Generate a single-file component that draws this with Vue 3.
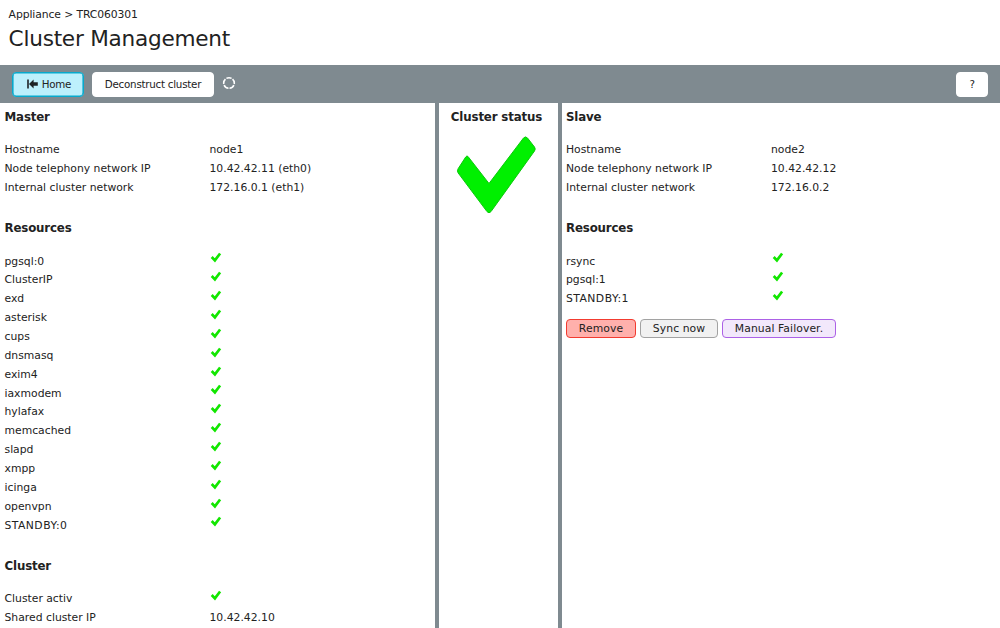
<script setup>
const master = [
  {
    title: 'Master',
    rows: [
      ['Hostname', 'node1'],
      ['Node telephony network IP', '10.42.42.11 (eth0)'],
      ['Internal cluster network', '172.16.0.1 (eth1)'],
    ],
  },
  {
    title: 'Resources',
    rows: [
      'pgsql:0', 'ClusterIP', 'exd', 'asterisk', 'cups', 'dnsmasq', 'exim4', 'iaxmodem',
      'hylafax', 'memcached', 'slapd', 'xmpp', 'icinga', 'openvpn', 'STANDBY:0',
    ].map((name) => [name, true]),
  },
  {
    title: 'Cluster',
    rows: [
      ['Cluster activ', true],
      ['Shared cluster IP', '10.42.42.10'],
    ],
  },
]

const slave = [
  {
    title: 'Slave',
    rows: [
      ['Hostname', 'node2'],
      ['Node telephony network IP', '10.42.42.12'],
      ['Internal cluster network', '172.16.0.2'],
    ],
  },
  {
    title: 'Resources',
    rows: ['rsync', 'pgsql:1', 'STANDBY:1'].map((name) => [name, true]),
  },
]

const nodes = [
  { key: 'master', sections: master },
  { key: 'slave', sections: slave },
]

const isCaps = (text) => text === text.toUpperCase()
</script>

<template>
  <div class="page">
    <header class="head">
      <div class="crumb"><span>Appliance &gt; TRC060301</span></div>
      <h1><span>Cluster Management</span></h1>
    </header>

    <nav class="toolbar">
      <button class="btn home">
        <svg width="11" height="10" viewBox="0 0 11 10">
          <path d="M1 0.5V9.5" stroke="#1c2224" stroke-width="1.6" />
          <path d="M2 5L6.6 0.5V3.3H10.8V6.7H6.6V9.5Z" fill="#1c2224" />
        </svg>
        <span>Home</span>
      </button>
      <button class="btn deconstruct"><span>Deconstruct cluster</span></button>
      <svg class="spinner" width="14" height="14" viewBox="0 0 14 14">
        <circle cx="7" cy="7" r="5.3" fill="none" stroke="#fff" stroke-width="1.6" pathLength="60" stroke-dasharray="10 2" stroke-dashoffset="-4" />
      </svg>
      <button class="btn help"><span>?</span></button>
    </nav>

    <main class="columns">
      <div v-for="node in nodes" :key="node.key" class="node" :class="node.key">
        <section v-for="section in node.sections" :key="section.title">
          <h2><span>{{ section.title }}</span></h2>
          <div v-for="row in section.rows" :key="row[0]" class="row">
            <div class="label" :class="{ caps: isCaps(row[0]) }"><span>{{ row[0] }}</span></div>
            <svg v-if="row[1] === true" class="tick" width="12" height="11" viewBox="0 0 12 11">
              <path d="M1.7 5L4.9 8.4L10.1 1.5" fill="none" stroke="#12e600" stroke-width="2.7" />
            </svg>
            <div v-else class="value"><span>{{ row[1] }}</span></div>
          </div>
        </section>
        <div v-if="node.key === 'slave'" class="actions">
          <button class="act remove"><span>Remove</span></button>
          <button class="act sync"><span>Sync now</span></button>
          <button class="act failover"><span>Manual Failover.</span></button>
        </div>
      </div>

      <div class="status">
        <h2><span>Cluster status</span></h2>
        <svg width="82" height="80" viewBox="0 0 82 80">
          <path d="M12 21.5L33 48.5L67.5 3Q69.5 0.8 71.5 3L78.5 12Q79.9 14 78.5 16L35 76.6Q33 79 31 76.6L2.2 38Q0.7 36 2.2 33.6L9.7 22Q10.9 20.3 12 21.5Z" fill="#00f000" stroke="#0cc80c" stroke-width="1" stroke-linejoin="round" />
        </svg>
      </div>
    </main>
  </div>
</template>

<style>
body {
  margin: 0;
  background: #fff;
  overflow: hidden;
}
</style>

<style scoped>
.page {
  height: 628px;
  overflow: hidden;
  display: flex;
  flex-direction: column;
  box-sizing: border-box;
  font-family: "DejaVu Sans", Verdana, sans-serif;
  font-size: 10.8px;
  color: #222;
  background: #fff;
}
span {
  white-space: nowrap;
}
.head {
  flex: none;
  height: 65px;
  box-sizing: border-box;
  padding: 6px 0 0 8.6px;
}
.crumb {
  height: 18px;
  line-height: 18px;
  letter-spacing: -0.1px;
}
h1 {
  margin: 0;
  font-size: 21.6px;
  line-height: 30px;
  font-weight: 400;
  letter-spacing: -0.24px;
}
.toolbar {
  flex: none;
  height: 38px;
  box-sizing: border-box;
  padding: 0 12px;
  display: flex;
  align-items: center;
  background: #7f8a90;
}
.btn {
  height: 25px;
  box-sizing: border-box;
  padding: 0;
  display: flex;
  align-items: center;
  justify-content: center;
  font: inherit;
  font-size: 10.3px;
  letter-spacing: -0.24px;
  color: inherit;
  background: #fff;
  border: 1px solid #fff;
  border-radius: 4px;
}
.home {
  width: 72px;
  gap: 4px;
  padding-left: 2px;
  background: #bdf0fc;
  border: 1px solid #08a9cc;
  box-shadow: inset 0 0 0 0.6px #08a9cc;
}
.deconstruct {
  width: 122px;
  margin-left: 8px;
}
.spinner {
  margin: -2px 0 0 8px;
}
.help {
  width: 32px;
  margin-left: auto;
}
.columns {
  flex: 1;
  min-height: 0;
  display: grid;
  grid-template-columns: 435px 119px 438px;
  column-gap: 4px;
  background: #7f8a90;
}
.node,
.status {
  grid-row: 1;
  min-width: 0;
  min-height: 0;
  overflow: hidden;
  background: #fff;
  padding-top: 5.1px;
}
.node {
  padding-left: 4.5px;
}
.master {
  grid-column: 1;
}
.slave {
  grid-column: 3;
  padding-left: 4px;
}
.status {
  grid-column: 2;
  display: flex;
  flex-direction: column;
  align-items: center;
}
h2 {
  margin: 0 0 13.3px;
  font-size: 11.8px;
  font-weight: 700;
  line-height: 18.86px;
  letter-spacing: -0.15px;
}
section + section {
  margin-top: 22.6px;
}
.row {
  height: 18.86px;
  line-height: 20.4px;
  display: grid;
  grid-template-columns: 205px 1fr;
}
.caps {
  letter-spacing: 0.45px;
}
.tick {
  margin: 0.8px 0 0 0.5px;
}
.status h2 {
  margin-bottom: 8px;
  margin-right: 4px;
}
.status svg {
  flex: none;
  margin-right: 3px;
}
.actions {
  margin-top: 10.4px;
  display: flex;
  gap: 4px;
}
.act {
  height: 19px;
  box-sizing: border-box;
  padding: 0;
  font: inherit;
  letter-spacing: 0.08px;
  color: inherit;
  line-height: 17px;
  border: 1px solid;
  border-radius: 4px;
}
.remove {
  width: 70px;
  background: #ffb0ac;
  border-color: #f23b30;
}
.sync {
  width: 78px;
  background: #f1f1f1;
  border-color: #a2a2a2;
}
.failover {
  width: 114px;
  background: #f2e8fb;
  border-color: #ac61e6;
}
</style>
